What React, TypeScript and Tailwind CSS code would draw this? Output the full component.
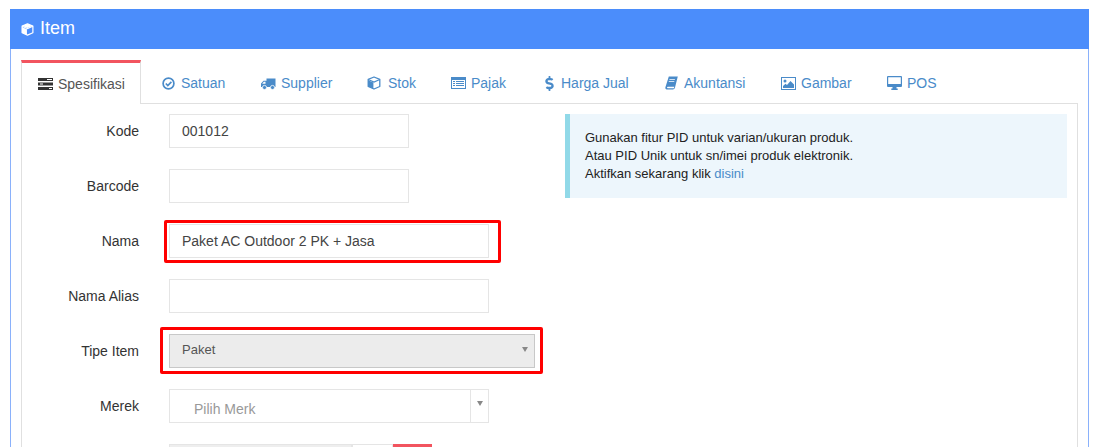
import React from "react";
import { FaDollarSign } from "react-icons/fa";

const TasksIcon = () => (
  <svg width="15" height="12" viewBox="0 0 15 12" className="shrink-0 text-[#333]" fill="currentColor">
    <path d="M0 0h15v3H0zM0 4.5h15v3H0zM0 9h15v3H0z" />
    <path d="M9 1h5v1H9zM2 5.5h3v1H2zM11 10h3v1h-3z" fill="#fff" />
  </svg>
);

const CheckIcon = () => (
  <svg width="13" height="13" viewBox="0 0 13 13" className="shrink-0" fill="none" stroke="currentColor">
    <circle cx="6.5" cy="6.5" r="5.4" strokeWidth="1.7" />
    <path d="M3.8 6.5l2 2 3.6-3.6" strokeWidth="1.7" />
  </svg>
);

const TruckIcon = () => (
  <svg width="15" height="13" viewBox="0 0 15 13" className="shrink-0" fill="currentColor">
    <path d="M5.5 1.5h9v8.5H0V6.5l2.5-2.8h3zM2.9 4.700L1.200 6.700h3.300v-2z" fillRule="evenodd" />
    <circle cx="3.5" cy="10.5" r="2.1" stroke="#fff" strokeWidth="0.8" />
    <circle cx="11.5" cy="10.5" r="2.1" stroke="#fff" strokeWidth="0.8" />
  </svg>
);

const CubeIcon = ({ size = 14, solid = false }: { size?: number; solid?: boolean }) => (
  <svg width={size} height={size} viewBox="0 0 14 14" className="shrink-0" fill="none" stroke="currentColor">
    <path d="M7 1l5.800 2.300v7.200L7 13 1.200 10.500V3.300z" strokeWidth="1.300" strokeLinejoin="round" />
    <path d="M1.200 3.500L7 6l5.800-2.500" strokeWidth="1.200" />
    <path d="M1 4.200L6.400 6.600v6.200L1 10.500z" fill="currentColor" stroke="none" />
    {solid && <path d="M1.500 3.200L7 1.200l5.500 2L7 5.300z" fill="currentColor" stroke="none" />}
  </svg>
);

const ListIcon = () => (
  <svg width="15" height="12" viewBox="0 0 15 12" className="shrink-0" fill="currentColor">
    <path d="M0 0h15v12H0zM1 3v8h13V3z" fillRule="evenodd" />
    <path d="M2 4h2v1H2zM5 4h8v1H5zM2 6h2v1H2zM5 6h8v1H5zM2 8h2v1H2zM5 8h8v1H5z" />
  </svg>
);

const BookIcon = () => (
  <svg width="13" height="14" viewBox="0 0 13 14" className="shrink-0" fill="currentColor">
    <path d="M3.800 0.500h9L10 11.500c-.3 1.200-1 2-2.200 2H1.800C.6 13.500.1 12.400.4 11.200zM2.800 10.800c-.9 0-1.100 1.400 0 1.400h6.100l.4-1.400z" fillRule="evenodd" />
    <path d="M4.500 3h5.500l-.2.800H4.300zM3.900 5h5.500l-.2.800H3.700z" fill="#fff" />
  </svg>
);

const ImageIcon = () => (
  <svg width="15" height="13" viewBox="0 0 15 13" className="shrink-0" fill="currentColor">
    <path d="M0 0h15v13H0zM1 1v11h13V1z" fillRule="evenodd" />
    <circle cx="4" cy="4" r="1.500" />
    <path d="M2 11V9l2.500-2.200L6 8l3.500-4L13 7.500V11z" />
  </svg>
);

const DesktopIcon = () => (
  <svg width="15" height="14" viewBox="0 0 15 14" className="shrink-0" fill="currentColor">
    <path d="M1 0h13a1 1 0 0 1 1 1v9a1 1 0 0 1-1 1H1a1 1 0 0 1-1-1V1a1 1 0 0 1 1-1zM1.200 1.200v6.800h12.600V1.200z" fillRule="evenodd" />
    <path d="M5.500 11h4v1.500h1.200V14H4.300v-1.500h1.200z" />
  </svg>
);

const tabs = [
  { label: "Satuan", icon: <CheckIcon />, width: "w-[120px]", pad: "pl-[21px]", box: "w-[19px]" },
  { label: "Supplier", icon: <TruckIcon />, width: "w-[106px]", pad: "", box: "w-[20px]" },
  { label: "Stok", icon: <CubeIcon />, width: "w-[84px]", pad: "", box: "w-[21px]" },
  { label: "Pajak", icon: <ListIcon />, width: "w-[94px]", pad: "", box: "w-[20px]" },
  { label: "Harga Jual", icon: <FaDollarSign className="w-[9px] h-[15px]" />, width: "w-[120px]", pad: "", box: "w-[16px]" },
  { label: "Akuntansi", icon: <BookIcon />, width: "w-[116px]", pad: "", box: "w-[19px]" },
  { label: "Gambar", icon: <ImageIcon />, width: "w-[106px]", pad: "", box: "w-[20px]" },
  { label: "POS", icon: <DesktopIcon />, width: "w-[60px]", pad: "", box: "w-[20px]" },
];

const inputClass =
  "h-[34px] border border-[#e5e5e5] bg-white px-3 flex items-center text-sm text-[#444]";

function Row({ label, children }: { label: string; children: React.ReactNode }) {
  return (
    <div className="flex mb-[21px]">
      <div className="w-[117px] h-[34px] pt-[7px] text-right text-sm text-[#333]">{label}</div>
      <div className="ml-[30px]">{children}</div>
    </div>
  );
}

export default function App() {
  return (
    <div className="h-screen overflow-hidden bg-white pt-[9px] pl-[10px] font-['Liberation_Sans',Arial,sans-serif]">
      <div className="w-[1079px] border-x border-[#8ab1fb]">
        <div className="h-[40px] -mx-px bg-[#4b8dfb] flex items-center pl-[11px] pb-[2px] text-white">
          <span className="mt-[3px]">
            <CubeIcon size={13} solid />
          </span>
          <span className="ml-[6px] text-lg">Item</span>
        </div>

        <div className="pt-[11px] px-[10px]">
          <div className="flex h-[44px] border-b border-[#e0e0e0] w-[1057px]">
            <div className="w-[120px] h-[44px] shrink-0 border-x border-[#e0e0e0] border-t-[3px] border-t-[#f2545f] bg-white flex items-center pl-[16px] gap-[5px] text-sm text-[#555]">
              <TasksIcon />
              <span>Spesifikasi</span>
            </div>
            {tabs.map((tab) => (
              <div
                key={tab.label}
                className={`${tab.width} ${tab.pad} h-[43px] pt-[3px] shrink-0 flex items-center text-sm text-[#4a8bc9]`}
              >
                <span className={`${tab.box} shrink-0 flex items-center`}>{tab.icon}</span>
                <span>{tab.label}</span>
              </div>
            ))}
          </div>

          <div className="w-[1057px] border-x border-[#e0e0e0] flex pt-[10px] h-[400px]">
            <div className="w-[543px] shrink-0">
              <Row label="Kode">
                <div className={`${inputClass} w-[240px]`}>001012</div>
              </Row>
              <Row label="Barcode">
                <div className={`${inputClass} w-[240px]`} />
              </Row>
              <Row label="Nama">
                <div className="relative">
                  <div className={`${inputClass} w-[320px]`}>Paket AC Outdoor 2 PK + Jasa</div>
                  <div className="absolute left-[-5px] right-[-12px] top-[-4px] bottom-[-5px] border-[3px] border-[#ff0000] rounded-[2px]" />
                </div>
              </Row>
              <Row label="Nama Alias">
                <div className={`${inputClass} w-[320px]`} />
              </Row>
              <Row label="Tipe Item">
                <div className="relative">
                  <div className="h-[34px] w-[366px] border border-[#c8c8c8] bg-[#ececec] pl-3 pr-[6px] pb-[3px] flex items-center justify-between text-[13px] text-[#555]">
                    <span>Paket</span>
                    <span className="w-0 h-0 border-x-[3.5px] border-x-transparent border-t-[5px] border-t-[#888]" />
                  </div>
                  <div className="absolute left-[-9px] right-[-8px] top-[-7px] bottom-[-6px] border-[3px] border-[#ff0000] rounded-[2px]" />
                </div>
              </Row>
              <Row label="Merek">
                <div className="h-[34px] w-[320px] border border-[#e5e5e5] bg-white flex">
                  <div className="w-[301px] border-r border-[#e5e5e5] pl-[24px] pt-[9px] text-sm text-[#999]">
                    Pilih Merk
                  </div>
                  <div className="flex-1 flex justify-center pt-[11px]">
                    <span className="w-0 h-0 border-x-[3.5px] border-x-transparent border-t-[5px] border-t-[#888]" />
                  </div>
                </div>
              </Row>
              <div className="flex ml-[147px] h-[34px]">
                <div className="w-[183px] border border-[#e5e5e5] bg-[#eeeeee]" />
                <div className="w-[41px] border border-[#e5e5e5] bg-white" />
                <div className="w-[39px] bg-[#f2545f]" />
              </div>
            </div>

            <div className="w-[502px] h-[84px] shrink-0 border-l-[5px] border-[#91d9e8] bg-[#edf6fc] pl-[15px] pt-[15px] text-[13px] leading-[18px] text-[#222]">
              <div>Gunakan fitur PID untuk varian/ukuran produk.</div>
              <div>Atau PID Unik untuk sn/imei produk elektronik.</div>
              <div>
                Aktifkan sekarang klik <span className="text-[#4a8bc9]">disini</span>
              </div>
            </div>
          </div>
        </div>
      </div>
    </div>
  );
}
